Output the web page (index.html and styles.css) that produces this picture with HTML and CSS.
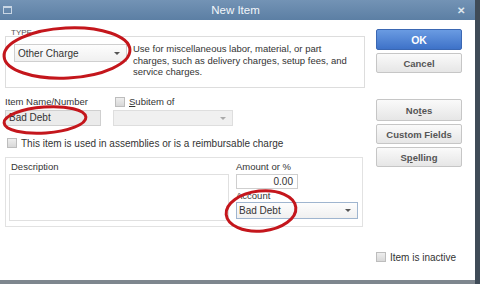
FILE: index.html
```html
<!DOCTYPE html>
<html lang="en">
  <head>
    <meta charset="UTF-8" />
    <title>New Item</title>
    <link rel="stylesheet" href="styles.css">
  </head>
  <body>
    <div class="window">
      <div class="titlebar">
        <span class="sys-icon"></span>
        <span class="title">New Item</span>
        <span class="close">&#x2715;</span>
      </div>

      <div class="content">
        <div class="main">
          <div class="type-label">TYPE</div>
          <div class="type-box">
            <div class="select type-select">
              <span>Other Charge</span>
              <span class="arrow"></span>
            </div>
            <p class="type-help">
              Use for miscellaneous labor, material, or part<br>
              charges, such as delivery charges, setup fees, and<br>
              service charges.
            </p>
          </div>

          <div class="name-row">
            <div class="name-col">
              <label class="field-label">Item Name/Number</label>
              <div class="input name-input">Bad Debt</div>
            </div>
            <div class="sub-col">
              <label class="field-label check-label">
                <span class="check"></span><u>S</u>ubitem of
              </label>
              <div class="select disabled sub-select">
                <span></span>
                <span class="arrow"></span>
              </div>
            </div>
          </div>

          <label class="check-label assembly">
            <span class="check"></span>This item is used in assemblies or is a reimbursable charge
          </label>

          <div class="desc-box">
            <div class="desc-col">
              <label class="field-label">Description</label>
              <div class="textarea"></div>
            </div>
            <div class="amount-col">
              <label class="field-label">Amount or %</label>
              <div class="input amount-input">0.00</div>
              <label class="field-label account-label">Account</label>
              <div class="select account-select">
                <span>Bad Debt</span>
                <span class="arrow"></span>
              </div>
            </div>
          </div>
        </div>

        <div class="side">
          <button class="btn primary">OK</button>
          <button class="btn">Cancel</button>
          <button class="btn spaced">No<u>t</u>es</button>
          <button class="btn">Custom Fields</button>
          <button class="btn">S<u>p</u>elling</button>
          <label class="check-label inactive">
            <span class="check"></span>Item is inactive
          </label>
        </div>
      </div>

      <!-- hand-drawn highlight rings over the form -->
      <svg class="marks" width="475" height="280" viewBox="0 0 475 280">
        <ellipse cx="67" cy="53" rx="63" ry="25" transform="rotate(-3 67 53)" />
        <ellipse cx="45" cy="120" rx="41" ry="13" transform="rotate(-4 45 120)" />
        <ellipse cx="261" cy="211" rx="35" ry="20" transform="rotate(-6 261 211)" />
      </svg>
    </div>
  </body>
</html>
```

FILE: styles.css
```css
:root {
  --border: #cfcfcf;
  --text: #333;
  --mark: #c4161c;
}

html {
  background: #7e868e;
}

body {
  margin: 0;
  width: 480px;
  height: 284px;
  background: linear-gradient(90deg, #7e868e 0, #7e868e 475px, #3f4b57 475px);
  font-family: "Liberation Sans", Arial, sans-serif;
  font-size: 9.5px;
  color: var(--text);
  overflow: hidden;
}

.window {
  position: relative;
  width: 475px;
  height: 280px;
  background: #fff;
  display: flex;
  flex-direction: column;
}

.titlebar {
  height: 20px;
  background: linear-gradient(#7393b5, #5c7fa4);
  display: flex;
  align-items: center;
  color: #f2f6fa;
  flex-shrink: 0;
}

.sys-icon {
  width: 7px;
  height: 5px;
  margin-left: 3px;
  border: 1px solid #c9d6e4;
  border-top-width: 2px;
}

.title {
  flex: 1;
  text-align: center;
  font-size: 11.5px;
  margin-left: 2px;
}

.close {
  width: 16px;
  margin-right: 2px;
  font-size: 10px;
  font-weight: bold;
  color: #dfe7ef;
}

.content {
  flex: 1;
  display: flex;
}

.main {
  width: 360px;
  margin-left: 5px;
  padding-top: 9px;
}

.type-label {
  font-size: 8px;
  line-height: 8px;
  margin-left: 6px;
  color: #555;
}

.type-box {
  height: 52px;
  box-sizing: border-box;
  border: 1px solid #ddd;
  margin-top: -1px;
  display: flex;
  align-items: flex-start;
  padding: 7px 0 0 8px;
}

.select {
  height: 16px;
  border: 1px solid var(--border);
  background: linear-gradient(#fdfdfd, #f0f0f0);
  display: flex;
  align-items: center;
  justify-content: space-between;
  padding: 0 6px 0 3px;
  box-sizing: border-box;
  flex-shrink: 0;
}

.arrow {
  width: 0;
  height: 0;
  border-left: 3px solid transparent;
  border-right: 3px solid transparent;
  border-top: 3px solid #555;
}

.type-select {
  width: 113px;
  height: 18px;
  font-size: 10px;
}

.type-help {
  margin: -1px 0 0 6px;
  font-size: 9.5px;
  line-height: 11.5px;
  white-space: nowrap;
}

.name-row {
  display: flex;
  margin-top: 8px;
}

.field-label {
  display: block;
  height: 12px;
  line-height: 12px;
  font-size: 9.5px;
}

.name-col {
  width: 96px;
}

.input {
  height: 16px;
  border: 1px solid var(--border);
  box-sizing: border-box;
  line-height: 14px;
  padding: 0 3px;
  margin-top: 2px;
}

.name-input {
  background: #ebebeb;
  font-size: 10px;
}

.sub-col {
  margin-left: 12px;
}

.sub-col .field-label {
  margin-left: 2px;
}

.sub-select {
  width: 120px;
  margin-top: 2px;
}

.disabled {
  background: #f0f0f0;
  border-color: #dedede;
}

.disabled .arrow {
  border-top-color: #aaa;
}

.check-label {
  display: flex;
  align-items: center;
}

.check {
  width: 8px;
  height: 8px;
  border: 1px solid #bdbdbd;
  background: linear-gradient(#eee, #d8d8d8);
  margin-right: 4px;
  flex-shrink: 0;
}

.assembly {
  margin: 11px 0 0 2px;
  height: 12px;
  font-size: 10px;
}

.desc-box {
  width: 358px;
  height: 70px;
  margin-top: 8px;
  border: 1px solid #e2e2e2;
  display: flex;
  padding: 3px 0 0 3px;
  box-sizing: border-box;
}

.desc-col .field-label {
  margin-left: 2px;
}

.textarea {
  width: 218px;
  height: 45px;
  border: 1px solid #e0e0e0;
  margin-top: 1px;
}

.amount-col {
  margin-left: 7px;
}

.amount-input {
  width: 62px;
  height: 15px;
  line-height: 13px;
  text-align: right;
  margin-top: 1px;
  padding-right: 4px;
  font-size: 10px;
}

.account-label {
  margin-top: 1px;
  height: 11px;
  line-height: 11px;
}

.account-select {
  width: 122px;
  height: 17px;
  border-color: #9fb5cf;
  margin-top: 1px;
  padding-left: 2px;
  font-size: 10px;
}

.side {
  width: 86px;
  margin-left: 11px;
  padding-top: 9px;
  display: flex;
  flex-direction: column;
}

.btn {
  height: 20px;
  margin: 0 0 3px;
  padding: 0;
  border: 1px solid #c6c6c6;
  border-radius: 2px;
  background: linear-gradient(#fafafa, #e6e6e6);
  font-family: inherit;
  font-size: 9.5px;
  font-weight: bold;
  color: #555;
}

.btn.primary {
  height: 21px;
  border-color: #3a67b3;
  background: linear-gradient(#6a9be2, #3e72c8);
  color: #fff;
  font-size: 10.5px;
}

.btn.spaced {
  margin-top: 23px;
  height: 22px;
}

.inactive {
  margin-top: 81px;
  font-size: 10px;
  height: 12px;
}

.marks {
  position: absolute;
  left: 0;
  top: 0;
  pointer-events: none;
}

.marks ellipse {
  fill: none;
  stroke: var(--mark);
  stroke-width: 3;
}
```
